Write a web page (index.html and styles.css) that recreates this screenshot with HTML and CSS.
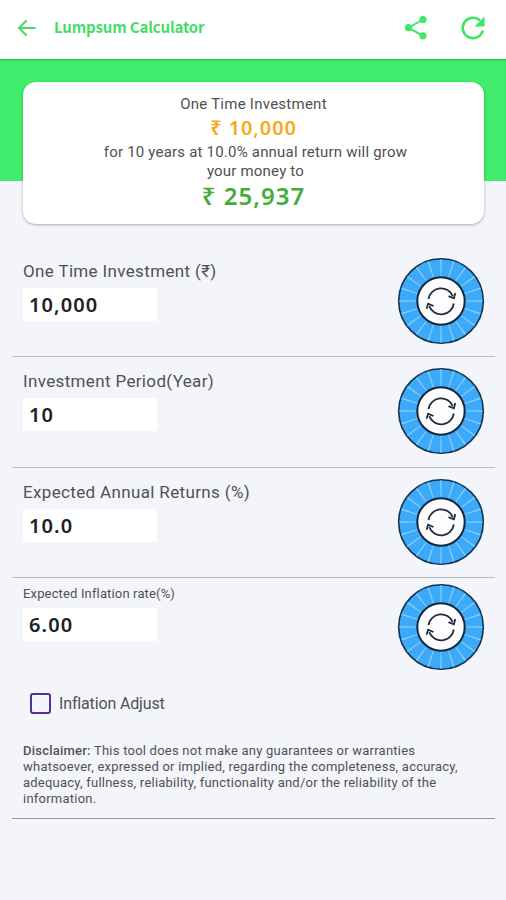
FILE: index.html
```html
<!DOCTYPE html>
<html lang="en">
  <head>
    <meta charset="UTF-8" />
    <title>Lumpsum Calculator</title>
    <link rel="stylesheet" href="styles.css" />
  </head>
  <body>
    <!-- shared dial drawing -->
    <svg class="defs" width="0" height="0">
      <symbol id="dial" viewBox="0 0 88 88">
        <circle cx="44" cy="44" r="42.3" fill="#3da9fa" stroke="#12334e" stroke-width="1.6" />
        <circle cx="44" cy="44" r="33" fill="none" stroke="#85cef8" stroke-width="17" pathLength="200" stroke-dasharray="1.2 8.8" stroke-dashoffset="0.6" />
        <circle cx="44" cy="44" r="23.7" fill="#fdfdff" stroke="#14273a" stroke-width="2" />
        <g fill="none" stroke="#222c36" stroke-width="1.8">
          <path d="M31.5 42a12.7 12.7 0 0 1 24.3-2.8" />
          <path d="M56.8 46.5a12.7 12.7 0 0 1-24.5 2.6" />
          <path d="M51.5 39.2l5.4 2.2 1.4-5.3" />
          <path d="M36.5 49l-5.4-2.3-1.5 5" />
        </g>
      </symbol>
    </svg>

    <header class="topbar">
      <svg class="back" viewBox="0 0 20 18">
        <path d="M18.500 9H2.500M9.500 1.500L2 9l7.500 7.500" fill="none" stroke="#47dc68" stroke-width="2" />
      </svg>
      <h1>Lumpsum Calculator</h1>
      <svg class="share" viewBox="0 0 24 26">
        <path d="M19 4.500L4.500 12.700L19 20.800" fill="none" stroke="#3ee766" stroke-width="2" />
        <circle cx="19" cy="4.500" r="3.600" fill="#3ee766" />
        <circle cx="4.500" cy="12.700" r="3.600" fill="#3ee766" />
        <circle cx="19" cy="20.800" r="3.600" fill="#3ee766" />
      </svg>
      <svg class="refresh" viewBox="0 0 26 26">
        <path d="M20 5.600A10.200 10.200 0 1 0 22.800 15.500" fill="none" stroke="#3ee766" stroke-width="2.700" />
        <path d="M24.500 1.500v10h-10z" fill="#3ee766" />
      </svg>
    </header>

    <section class="hero">
      <div class="result">
        <p class="line">One Time Investment</p>
        <p class="invested">₹ 10,000</p>
        <p class="line summary">for 10 years at 10.0% annual return will grow<br />your money to</p>
        <p class="total">₹ 25,937</p>
      </div>
    </section>

    <main>
      <div class="row">
        <div class="field">
          <label for="amount">One Time Investment (₹)</label>
          <input type="text" id="amount" value="10,000" />
        </div>
        <svg class="dial"><use href="#dial" /></svg>
      </div>
      <div class="row">
        <div class="field">
          <label for="period">Investment Period(Year)</label>
          <input type="text" id="period" value="10" />
        </div>
        <svg class="dial"><use href="#dial" /></svg>
      </div>
      <div class="row">
        <div class="field">
          <label for="returns">Expected Annual Returns (%)</label>
          <input type="text" id="returns" value="10.0" />
        </div>
        <svg class="dial"><use href="#dial" /></svg>
      </div>
      <div class="row inflation">
        <div class="field">
          <label for="inflation">Expected Inflation rate(%)</label>
          <input type="text" id="inflation" value="6.00" />
        </div>
        <svg class="dial"><use href="#dial" /></svg>
      </div>

      <label class="adjust"><input type="checkbox" /><span>Inflation Adjust</span></label>

      <p class="disclaimer">
        <b>Disclaimer:</b> This tool does not make any guarantees or warranties<br />
        whatsoever, expressed or implied, regarding the completeness, accuracy,<br />
        adequacy, fullness, reliability, functionality and/or the reliability of the<br />
        information.
      </p>
    </main>
  </body>
</html>
```
FILE: styles.css
```css
* {
  box-sizing: border-box;
}
body {
  margin: 0;
  min-height: 900px;
  background-color: #f3f5fa;
  font-family: Roboto, sans-serif;
  color: #505156;
}
h1,
p {
  margin: 0;
}
.defs {
  display: block;
}
.topbar {
  display: flex;
  align-items: center;
  height: 59px;
  padding: 0 20px 3px 17px;
  background-color: #ffffff;
}
.topbar h1 {
  flex: 1;
  margin: -2px 0 0 17px;
  font-family: "Noto Sans CJK SC", "Noto Sans", sans-serif;
  font-size: 15px;
  font-weight: 700;
  line-height: 24px;
  letter-spacing: -0.15px;
  color: #47dc68;
}
.back {
  width: 20px;
  height: 18px;
}
.share {
  width: 24px;
  height: 26px;
}
.refresh {
  width: 26px;
  height: 26px;
  margin-left: 32px;
}
.hero {
  height: 122px;
  padding: 23px 22px 0 23px;
  background-color: #40ec6b;
  box-shadow: inset 0 2px 2px -1px rgba(0, 0, 0, 0.25);
}
.result {
  height: 142px;
  padding-top: 12px;
  border-radius: 13px;
  background-color: #ffffff;
  box-shadow: 0 1px 3px rgba(0, 0, 0, 0.3);
  text-align: center;
}
.line {
  font-size: 15px;
  line-height: 20px;
  letter-spacing: 0.25px;
  color: #505050;
}
.summary {
  padding: 1px 0 0 4px;
  line-height: 18.5px;
  letter-spacing: 0.2px;
}
.summary + .total {
  margin-top: -2px;
}
.invested,
.total {
  font-family: "Noto Sans", sans-serif;
  font-weight: 600;
}
.invested {
  font-size: 20px;
  line-height: 28px;
  letter-spacing: 0.9px;
  color: #f6aa1c;
}
.total {
  font-size: 24px;
  line-height: 35px;
  letter-spacing: 1px;
  color: #43ad3b;
}
main {
  padding: 66px 11px 0 12px;
}
.row {
  display: flex;
  justify-content: space-between;
  height: 110.5px;
  padding: 10px 10px 0 11px;
  border-bottom: 1px solid #b9bbc0;
}
.row:first-child {
  height: 110px;
}
.field label {
  display: block;
  height: 31px;
  font-size: 17px;
  line-height: 28px;
  letter-spacing: 0.35px;
  white-space: nowrap;
}
.field input {
  display: block;
  width: 134px;
  height: 33px;
  padding: 0 6px;
  border: none;
  background-color: #ffffff;
  font-family: "Noto Sans", sans-serif;
  font-size: 20px;
  font-weight: 600;
  letter-spacing: 1.1px;
  color: #202124;
}
.dial {
  width: 88px;
  height: 88px;
}
.inflation {
  height: 105px;
  padding-top: 5px;
  border-bottom: none;
}
.inflation .field label {
  height: 25px;
  font-size: 13px;
  line-height: 22px;
  letter-spacing: 0.15px;
}
.adjust {
  display: flex;
  align-items: center;
  height: 26px;
  margin: 7px 0 0 18px;
  font-size: 16px;
  letter-spacing: -0.15px;
}
.adjust input {
  appearance: none;
  width: 21px;
  height: 21px;
  margin: 0 8px 0 0;
  border: 2px solid #56308f;
  border-radius: 3px;
}
.disclaimer {
  height: 103px;
  padding: 27px 0 0 11px;
  border-bottom: 1px solid #98999d;
  font-size: 13px;
  line-height: 16px;
  letter-spacing: 0.23px;
  white-space: nowrap;
}
.disclaimer b {
  font-weight: 500;
}
```
